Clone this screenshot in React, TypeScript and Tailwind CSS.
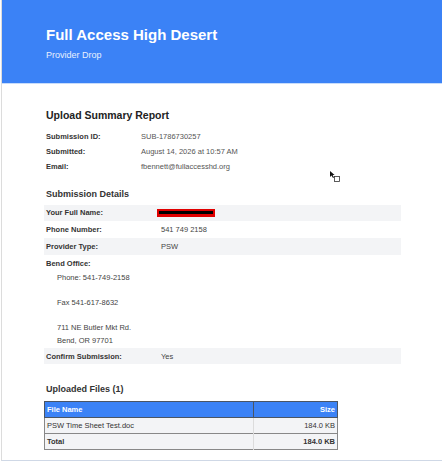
import React from 'react';

const summary = [
  { label: 'Submission ID:', value: 'SUB-1786730257' },
  { label: 'Submitted:', value: 'August 14, 2026 at 10:57 AM' },
  { label: 'Email:', value: 'fbennett@fullaccesshd.org' },
];

const address = 'Phone: 541-749-2158\n\nFax 541-617-8632\n\n711 NE Butler Mkt Rd.\nBend, OR 97701';

function DetailRow({ label, children, shaded }: { label: string; children: React.ReactNode; shaded?: boolean }) {
  return (
    <div className={`flex h-[16.7px] items-center pl-[2px] ${shaded ? 'bg-[#f3f4f6]' : ''}`}>
      <div className="w-[115px] font-bold text-[#333]">{label}</div>
      <div className="text-[#444]">{children}</div>
    </div>
  );
}

export default function App() {
  return (
    <div className="relative min-h-[462px] bg-white font-['Liberation_Sans',Arial,sans-serif]">
      <div className="ml-px border-b border-l border-[#cfd8e6] border-l-[#dcdcdc]">
        {/* header */}
        <div className="h-[84px] border-b border-[#c7dcfb] bg-[#3b82f6] pl-[44px] pt-[26px] text-white">
          <div className="text-[15px] font-bold leading-[18px]">Full Access High Desert</div>
          <div className="mt-[6px] text-[9px] leading-[11px] text-[#e8f0fe]">Provider Drop</div>
        </div>

        {/* body */}
        <div className="pb-[10px] pl-[42px] pr-[41px] pt-[24px] text-[7.5px]">
          <div className="pl-[2px] text-[10.5px] font-bold leading-[14px] text-[#222]">Upload Summary Report</div>
          <div className="mt-[7px] pl-[2px]">
            {summary.map((r) => (
              <div key={r.label} className="flex h-[15px] items-center">
                <div className="w-[95px] font-bold text-[#333]">{r.label}</div>
                <div className="text-[#555]">{r.value}</div>
              </div>
            ))}
          </div>

          <div className="mt-[13.5px] pl-[2px] text-[9px] font-bold leading-[12px] text-[#333]">Submission Details</div>
          <div className="mt-[5px]">
            <DetailRow label="Your Full Name:" shaded>
              <span className="ml-[-4px] flex h-[7.5px] w-[58px] items-center bg-[#e00000] px-[2px]">
                <span className="block h-[3px] w-full bg-black" />
              </span>
            </DetailRow>
            <DetailRow label="Phone Number:">541 749 2158</DetailRow>
            <DetailRow label="Provider Type:" shaded>PSW</DetailRow>
            <div className="pl-[2px] pt-[4px]">
              <div className="h-[10px] font-bold leading-[10px] text-[#333]">Bend Office:</div>
              <div className="mt-[3px] whitespace-pre-line pl-[11px] leading-[12.7px] text-[#444]">{address}</div>
            </div>
            <DetailRow label="Confirm Submission:" shaded>Yes</DetailRow>
          </div>

          <div className="mt-[19px] pl-[2px] text-[9px] font-bold leading-[12px] text-[#333]">Uploaded Files (1)</div>
          <table className="mt-[5.5px] w-[294px] border-collapse border border-[#888] text-left">
            <thead>
              <tr className="h-[16px] bg-[#3b82f6] text-white">
                <th className="w-[209px] border border-[#4b5563] pl-[2px] font-bold">File Name</th>
                <th className="border border-[#4b5563] pr-[2px] text-right font-bold">Size</th>
              </tr>
            </thead>
            <tbody className="bg-[#f3f4f6] text-[#333]">
              <tr className="h-[16px] border-b border-[#888]">
                <td className="border-r border-[#dcdcdc] pl-[2px]">PSW Time Sheet Test.doc</td>
                <td className="pr-[2px] text-right">184.0 KB</td>
              </tr>
              <tr className="h-[16px]">
                <td className="border-r border-[#dcdcdc] pl-[2px] font-bold">Total</td>
                <td className="pr-[2px] text-right font-bold">184.0 KB</td>
              </tr>
            </tbody>
          </table>
        </div>
      </div>

      {/* mouse cursor left in the screenshot */}
      <svg className="absolute left-[329px] top-[170px]" width="12" height="13" viewBox="0 0 12 13">
        <path d="M1 1 L1 7 L2.5 5.6 L4 8 L5 7.4 L3.6 5 L5.6 5 Z" fill="#111" />
        <rect x="5.5" y="6.5" width="5" height="5" fill="#fff" stroke="#333" strokeWidth="0.8" />
      </svg>
    </div>
  );
}
